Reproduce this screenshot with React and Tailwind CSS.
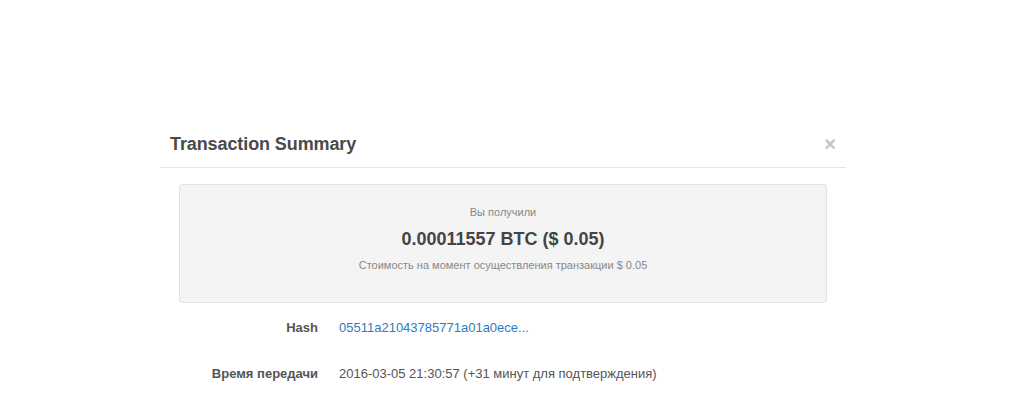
export default function App() {
  return (
    <div className="h-[410px] w-[1024px] bg-white font-['Liberation_Sans',Arial,sans-serif] text-[#555] overflow-hidden">
      <div className="ml-[160px] mt-[117px] w-[686px]">
        <div className="flex items-center justify-between border-b border-[#e5e5e5] pl-[10px] pr-[10px] pt-[17px] pb-[13px]">
          <h4 className="text-[18px] leading-[20px] font-bold text-[#4a4a4a] tracking-[-0.1px]">Transaction Summary</h4>
          <button className="text-[20px] leading-[20px] font-bold text-[#c4c4c4]">×</button>
        </div>
        <div className="px-[19px] pt-[16px]">
          <div className="rounded-[3px] border border-[#e3e3e3] bg-[#f4f4f4] h-[119px] flex flex-col items-center pt-[20px]">
            <p className="text-[11px] leading-[14px] text-[#888]">Вы получили</p>
            <p className="mt-[10px] text-[18px] leading-[20px] font-bold text-[#444]">0.00011557 BTC ($ 0.05)</p>
            <p className="mt-[9px] text-[11px] leading-[14px] text-[#888]">Стоимость на момент осуществления транзакции $ 0.05</p>
          </div>
          <dl className="mt-[17px] text-[13px] leading-[16px]">
            <div className="flex">
              <dt className="w-[139px] text-right font-bold text-[#555]">Hash</dt>
              <dd className="ml-[21px] text-[#2f7bbf]">05511a21043785771a01a0ece...</dd>
            </div>
            <div className="flex mt-[30px]">
              <dt className="w-[139px] text-right font-bold text-[#555]">Время передачи</dt>
              <dd className="ml-[21px] text-[#555]">2016-03-05 21:30:57 (+31 минут для подтверждения)</dd>
            </div>
          </dl>
        </div>
      </div>
    </div>
  );
}
